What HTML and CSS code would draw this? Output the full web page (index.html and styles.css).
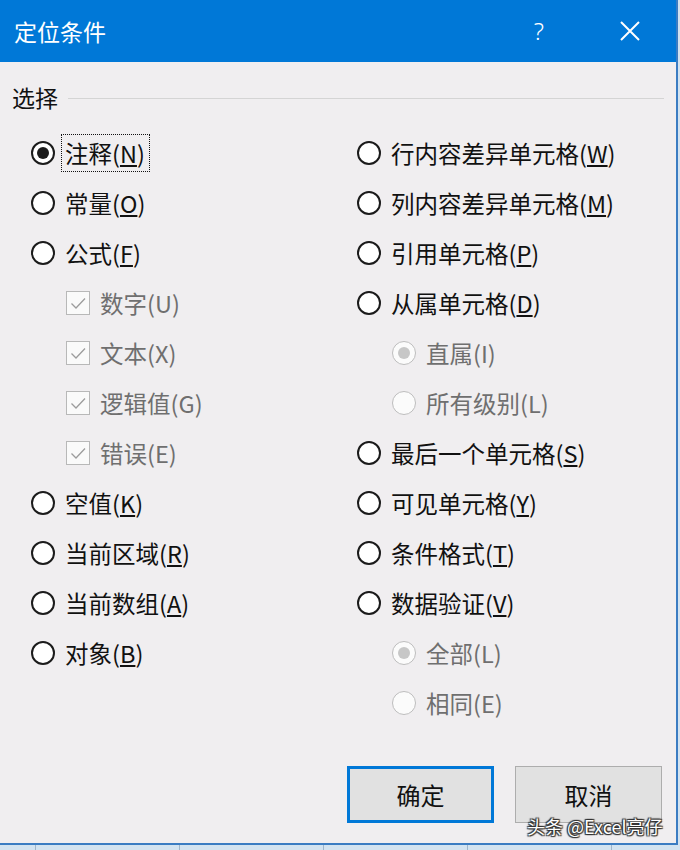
FILE: index.html
```html
<!DOCTYPE html>
<html lang="zh-CN">
<head>
<meta charset="utf-8">
<title>定位条件</title>
<link rel="stylesheet" href="styles.css">
</head>
<body>
<div class="dialog">
  <div class="titlebar">
    <span class="title">定位条件</span>
    <span class="help">?</span>
    <svg class="close" width="20" height="20" viewBox="0 0 20 20"><path d="M1 1 L19 19 M19 1 L1 19" stroke="#fff" stroke-width="2" fill="none"/></svg>
  </div>
  <div class="body">
    <div class="group-head"><span class="group-label">选择</span><span class="group-line"></span></div>
    <div class="options">
      <div class="col">
        <div class="row"><span class="radio on"></span><span class="label focus">注释(<u>N</u>)</span></div>
        <div class="row"><span class="radio"></span><span class="label">常量(<u>O</u>)</span></div>
        <div class="row"><span class="radio"></span><span class="label">公式(<u>F</u>)</span></div>
        <div class="row sub"><span class="check"><svg width="24" height="24" viewBox="0 0 24 24"><path d="M5.5 12.5 L10 17 L19 7.5" stroke="#9c9c9c" stroke-width="1.3" fill="none"/></svg></span><span class="label dis">数字(U)</span></div>
        <div class="row sub"><span class="check"><svg width="24" height="24" viewBox="0 0 24 24"><path d="M5.5 12.5 L10 17 L19 7.5" stroke="#9c9c9c" stroke-width="1.3" fill="none"/></svg></span><span class="label dis">文本(X)</span></div>
        <div class="row sub"><span class="check"><svg width="24" height="24" viewBox="0 0 24 24"><path d="M5.5 12.5 L10 17 L19 7.5" stroke="#9c9c9c" stroke-width="1.3" fill="none"/></svg></span><span class="label dis">逻辑值(G)</span></div>
        <div class="row sub"><span class="check"><svg width="24" height="24" viewBox="0 0 24 24"><path d="M5.5 12.5 L10 17 L19 7.5" stroke="#9c9c9c" stroke-width="1.3" fill="none"/></svg></span><span class="label dis">错误(E)</span></div>
        <div class="row"><span class="radio"></span><span class="label">空值(<u>K</u>)</span></div>
        <div class="row"><span class="radio"></span><span class="label">当前区域(<u>R</u>)</span></div>
        <div class="row"><span class="radio"></span><span class="label">当前数组(<u>A</u>)</span></div>
        <div class="row"><span class="radio"></span><span class="label">对象(<u>B</u>)</span></div>
      </div>
      <div class="col">
        <div class="row"><span class="radio"></span><span class="label">行内容差异单元格(<u>W</u>)</span></div>
        <div class="row"><span class="radio"></span><span class="label">列内容差异单元格(<u>M</u>)</span></div>
        <div class="row"><span class="radio"></span><span class="label">引用单元格(<u>P</u>)</span></div>
        <div class="row"><span class="radio"></span><span class="label">从属单元格(<u>D</u>)</span></div>
        <div class="row sub"><span class="radio disabled on"></span><span class="label dis">直属(I)</span></div>
        <div class="row sub"><span class="radio disabled"></span><span class="label dis">所有级别(L)</span></div>
        <div class="row"><span class="radio"></span><span class="label">最后一个单元格(<u>S</u>)</span></div>
        <div class="row"><span class="radio"></span><span class="label">可见单元格(<u>Y</u>)</span></div>
        <div class="row"><span class="radio"></span><span class="label">条件格式(<u>T</u>)</span></div>
        <div class="row"><span class="radio"></span><span class="label">数据验证(<u>V</u>)</span></div>
        <div class="row sub"><span class="radio disabled on"></span><span class="label dis">全部(L)</span></div>
        <div class="row sub"><span class="radio disabled"></span><span class="label dis">相同(E)</span></div>
      </div>
    </div>
    <div class="buttons">
      <button class="btn primary">确定</button>
      <button class="btn">取消</button>
    </div>
    <div class="watermark">头条 @Excel亮仔</div>
  </div>
</div>
<div class="sheet"></div>
</body>
</html>
```
FILE: styles.css
```css
html, body {
  margin: 0;
  padding: 0;
  background: #d3e3f0;
}
body {
  width: 680px;
  height: 850px;
  overflow: hidden;
  font-family: "Noto Sans CJK SC", "Noto Sans", sans-serif;
  color: #111;
}
.dialog {
  width: 678px;
  height: 845px;
  box-sizing: border-box;
  border-right: 2px solid #3b7cc2;
  border-bottom: 2px solid #3b7cc2;
  background: #f0eef0;
  display: flex;
  flex-direction: column;
}
.titlebar {
  height: 62px;
  flex: none;
  background: #0078d7;
  color: #fff;
  display: flex;
  align-items: center;
  padding-left: 14px;
}
.title {
  font-size: 23px;
  line-height: 1;
  flex: 1;
}
.help {
  font-family: "Noto Sans", sans-serif;
  font-weight: 300;
  font-size: 24px;
  line-height: 1;
  margin-right: 76px;
}
.close {
  margin-right: 36px;
}
.body {
  flex: 1;
  position: relative;
  display: flex;
  flex-direction: column;
}
.group-head {
  height: 30px;
  margin-top: 20px;
  display: flex;
  align-items: center;
  padding-left: 12px;
  padding-right: 12px;
}
.group-label {
  font-size: 23px;
  line-height: 1;
  margin-right: 10px;
}
.group-line {
  flex: 1;
  height: 1px;
  background: #d4d4d4;
  margin-top: 2px;
}
.options {
  margin-top: 16px;
  display: grid;
  grid-template-columns: 326px 1fr;
  padding-left: 31px;
}
.col {
  display: flex;
  flex-direction: column;
}
.row {
  height: 50px;
  display: flex;
  align-items: center;
}
.row.sub {
  padding-left: 35px;
}
.radio {
  width: 24px;
  height: 24px;
  box-sizing: border-box;
  border: 2px solid #1b1b1b;
  border-radius: 50%;
  background: #fff;
  flex: none;
  display: flex;
  align-items: center;
  justify-content: center;
}
.radio.on::after {
  content: "";
  width: 12px;
  height: 12px;
  border-radius: 50%;
  background: #1b1b1b;
}
.radio.disabled {
  border: 1.5px solid #bdbdbd;
  background: #fbfbfb;
}
.radio.disabled.on::after {
  background: #c7c7c7;
}
.check {
  width: 24px;
  height: 24px;
  box-sizing: border-box;
  border: 1px solid #b8b8b8;
  background: #fafafa;
  flex: none;
  display: flex;
}
.check svg {
  margin: -1px;
}
.label {
  font-size: 23.5px;
  line-height: 28px;
  margin-left: 6px;
  padding: 3px;
  border: 1px dotted transparent;
  white-space: nowrap;
}
.label u {
  text-decoration-thickness: 1.5px;
  text-underline-offset: 2px;
}
.label.focus {
  border-color: #111;
  padding: 4px 4px 4px 3px;
}
.label.dis {
  color: #6f6f6f;
}
.buttons {
  margin-top: 38px;
  display: flex;
  justify-content: flex-end;
  gap: 21px;
  padding-right: 14px;
}
.btn {
  width: 147px;
  height: 57px;
  box-sizing: border-box;
  background: #e1e1e1;
  border: 1px solid #adadad;
  font-family: "Noto Sans CJK SC", sans-serif;
  font-size: 24px;
  color: #111;
  padding: 0;
  margin: 0;
}
.btn.primary {
  border: 3px solid #0078d7;
}
.watermark {
  position: absolute;
  left: 527px;
  top: 752px;
  font-family: "Noto Sans CJK SC", sans-serif;
  font-size: 18px;
  line-height: 24px;
  color: #fff;
  white-space: nowrap;
  text-shadow: 0 0 1px #222, 1px 1px 1px #333, -1px -1px 1px #333, 1px -1px 1px #333, -1px 1px 1px #333;
}
.sheet {
  height: 5px;
  background: repeating-linear-gradient(to right, #d3e3f0 0, #d3e3f0 35px, #9fb6cc 35px, #9fb6cc 36px, #d3e3f0 36px, #d3e3f0 144px);
}
```
